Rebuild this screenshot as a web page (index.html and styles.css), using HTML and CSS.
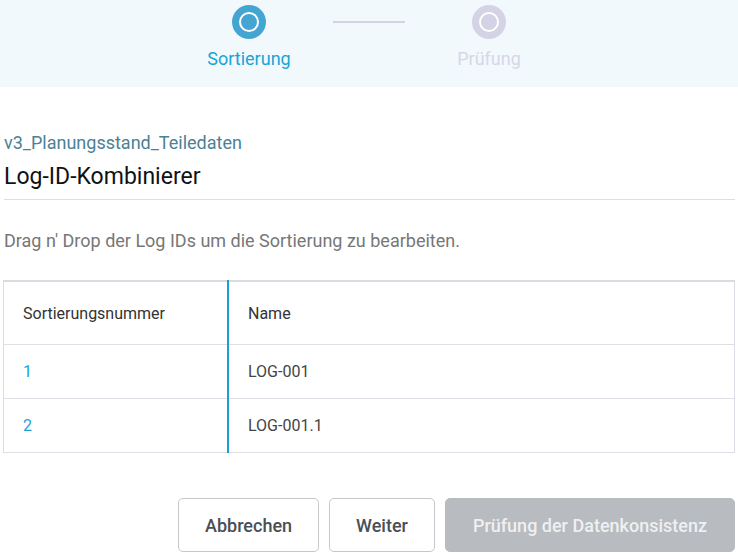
FILE: index.html
```html
<!DOCTYPE html>
<html lang="de">
<head>
  <meta charset="UTF-8" />
  <title>Log-ID-Kombinierer</title>
  <link rel="stylesheet" href="styles.css">
</head>
<body>

  <div class="stepper">
    <div class="step active">
      <span class="dot"></span>
      <span class="step-label">Sortierung</span>
    </div>
    <div class="step-line"></div>
    <div class="step">
      <span class="dot"></span>
      <span class="step-label">Prüfung</span>
    </div>
  </div>

  <main class="content">
    <div class="dataset">v3_Planungsstand_Teiledaten</div>
    <h2>Log-ID-Kombinierer</h2>

    <p class="hint">Drag n' Drop der Log IDs um die Sortierung zu bearbeiten.</p>

    <table class="sort-table">
      <thead>
        <tr>
          <th class="col-nr">Sortierungsnummer</th>
          <th>Name</th>
        </tr>
      </thead>
      <tbody>
        <tr>
          <td class="col-nr">1</td>
          <td>LOG-001</td>
        </tr>
        <tr>
          <td class="col-nr">2</td>
          <td>LOG-001.1</td>
        </tr>
      </tbody>
    </table>

    <div class="actions">
      <button class="btn">Abbrechen</button>
      <button class="btn">Weiter</button>
      <button class="btn btn-disabled" disabled>Prüfung der Datenkonsistenz</button>
    </div>
  </main>

</body>
</html>
```

FILE: styles.css
```css
body {
  margin: 0;
  font-family: Roboto, 'Liberation Sans', sans-serif;
  background: #fff;
  color: #222;
}

.stepper {
  background: #f2f9fc;
  height: 87px;
  display: flex;
  justify-content: center;
  align-items: flex-start;
  gap: 34px;
}

.step {
  width: 100px;
  display: flex;
  flex-direction: column;
  align-items: center;
  padding-top: 5px;
}

.dot {
  width: 34px;
  height: 34px;
  border-radius: 50%;
  background: #d3d3e5;
  position: relative;
}

.dot::after {
  content: '';
  position: absolute;
  left: 7px;
  top: 7px;
  width: 16px;
  height: 16px;
  border: 2px solid #fff;
  border-radius: 50%;
}

.step.active .dot {
  background: #45a5d2;
}

.step-label {
  margin-top: 10px;
  font-size: 18px;
  line-height: 20px;
  color: #d6d6e7;
}

.step.active .step-label {
  color: #19a3d6;
}

.step-line {
  width: 72px;
  height: 2px;
  margin-top: 21px;
  background: #d3d3e5;
}

.content {
  padding: 0 3px 0 4px;
}

.dataset {
  margin-top: 45px;
  font-size: 18px;
  line-height: 22px;
  color: #4b8194;
}

h2 {
  margin: 9px 0 0;
  padding-bottom: 8px;
  font-size: 23px;
  line-height: 28px;
  font-weight: 400;
  color: #111;
  border-bottom: 1px solid #dddde3;
}

.hint {
  margin: 30px 0 0;
  font-size: 18px;
  line-height: 22px;
  color: #777;
}

.sort-table {
  margin-top: 28px;
  margin-left: -1px;
  width: calc(100% + 1px);
  border-collapse: collapse;
  border-top: 2px solid #dadae3;
  border-left: 1px solid #dcdce6;
  border-right: 1px solid #dcdce6;
  font-size: 16px;
}

.sort-table th,
.sort-table td {
  text-align: left;
  padding: 0 19px;
  border-bottom: 1px solid #dedee6;
}

.sort-table th {
  height: 62px;
  font-weight: 400;
  color: #333;
}

.sort-table td {
  height: 53px;
  color: #444;
}

.sort-table .col-nr {
  width: 185px;
  border-right: 2px solid #1a9fd0;
}

.sort-table td.col-nr {
  color: #1ca2d9;
}

.actions {
  display: flex;
  justify-content: flex-end;
  gap: 10px;
  margin-top: 45px;
}

.btn {
  font-family: Roboto, 'Liberation Sans', sans-serif;
  height: 54px;
  padding: 0 26px;
  font-size: 18px;
  font-weight: 500;
  color: #4a4f55;
  background: #fff;
  border: 1px solid #c6c6c9;
  border-radius: 5px;
  cursor: pointer;
}

.btn-disabled {
  padding: 0 27px;
  background: #b8bbbf;
  border-color: #b8bbbf;
  color: #eef0f2;
  cursor: default;
}
```
